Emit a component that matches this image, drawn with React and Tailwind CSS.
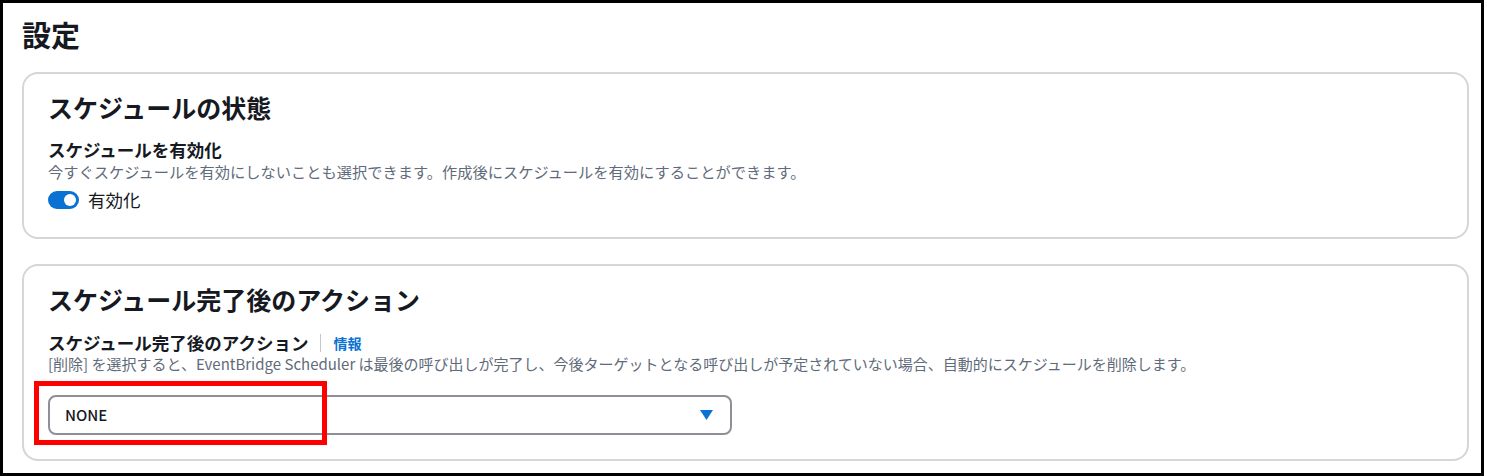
const font = { fontFamily: '"Noto Sans CJK JP", "Noto Sans", sans-serif' }

const Card = ({ title, children, className = '' }) => (
  <div className={`rounded-[16px] border-2 border-[#d5d5da] bg-white px-[24px] ${className}`}>
    <h2 className="text-[25px] leading-[32px] font-bold text-[#16191f]">{title}</h2>
    {children}
  </div>
)

const App = () => {
  return (
    <div className="bg-white w-[1487px] h-[476px]" style={font}>
      <div className="w-[1484px] h-[476px] border-[3px] border-black pl-[19px] pr-[12px] pt-[13px]">
        <h1 className="text-[29px] leading-[36px] font-bold text-[#16191f]">設定</h1>

        {/* スケジュールの状態 */}
        <Card title="スケジュールの状態" className="mt-[20px] pt-[17px] pb-[25px]">
          <div className="mt-[16px] text-[17.5px] leading-[22px] font-bold text-[#16191f]">
            スケジュールを有効化
          </div>
          <div className="text-[15.25px] leading-[20px] text-[#5f6b7a]">
            今すぐスケジュールを有効にしないことも選択できます。作成後にスケジュールを有効にすることができます。
          </div>
          <div className="mt-[7px] h-[24px] flex items-center gap-[9px]">
            <div className="w-[31px] h-[18px] rounded-full bg-[#0972d3] flex items-center justify-end pr-[3px]">
              <div className="w-[12px] h-[12px] rounded-full bg-white" />
            </div>
            <span className="text-[17.5px] text-[#16191f]">有効化</span>
          </div>
        </Card>

        {/* スケジュール完了後のアクション */}
        <Card title="スケジュール完了後のアクション" className="mt-[25px] pt-[17px] pb-[24px]">
          <div className="mt-[17px] flex items-center text-[17.5px] leading-[22px]">
            <span className="font-bold text-[#16191f]">スケジュール完了後のアクション</span>
            <span className="mx-[12px] w-px h-[18px] bg-[#c6c6cd]" />
            <span className="text-[14px] font-bold text-[#0972d3]">情報</span>
          </div>
          <div className="text-[15px] leading-[20px] text-[#5f6b7a]">
            [削除] を選択すると、EventBridge Scheduler は最後の呼び出しが完了し、今後ターゲットとなる呼び出しが予定されていない場合、自動的にスケジュールを削除します。
          </div>
          <div className="relative mt-[21px] w-[684px]">
            <div className="h-[40px] rounded-[8px] border-2 border-[#8d9096] flex items-center justify-between pl-[15px] pr-[17px]">
              <span className="text-[15px] font-medium text-[#16191f]">NONE</span>
              <svg width="13" height="10" viewBox="0 0 13 10">
                <path d="M0 0 H13 L6.5 10 Z" fill="#0972d3" />
              </svg>
            </div>
            <div className="absolute left-[-14px] top-[-14px] w-[293px] h-[64px] border-[5px] border-[#ff0000]" />
          </div>
        </Card>
      </div>
    </div>
  )
}

export default App
